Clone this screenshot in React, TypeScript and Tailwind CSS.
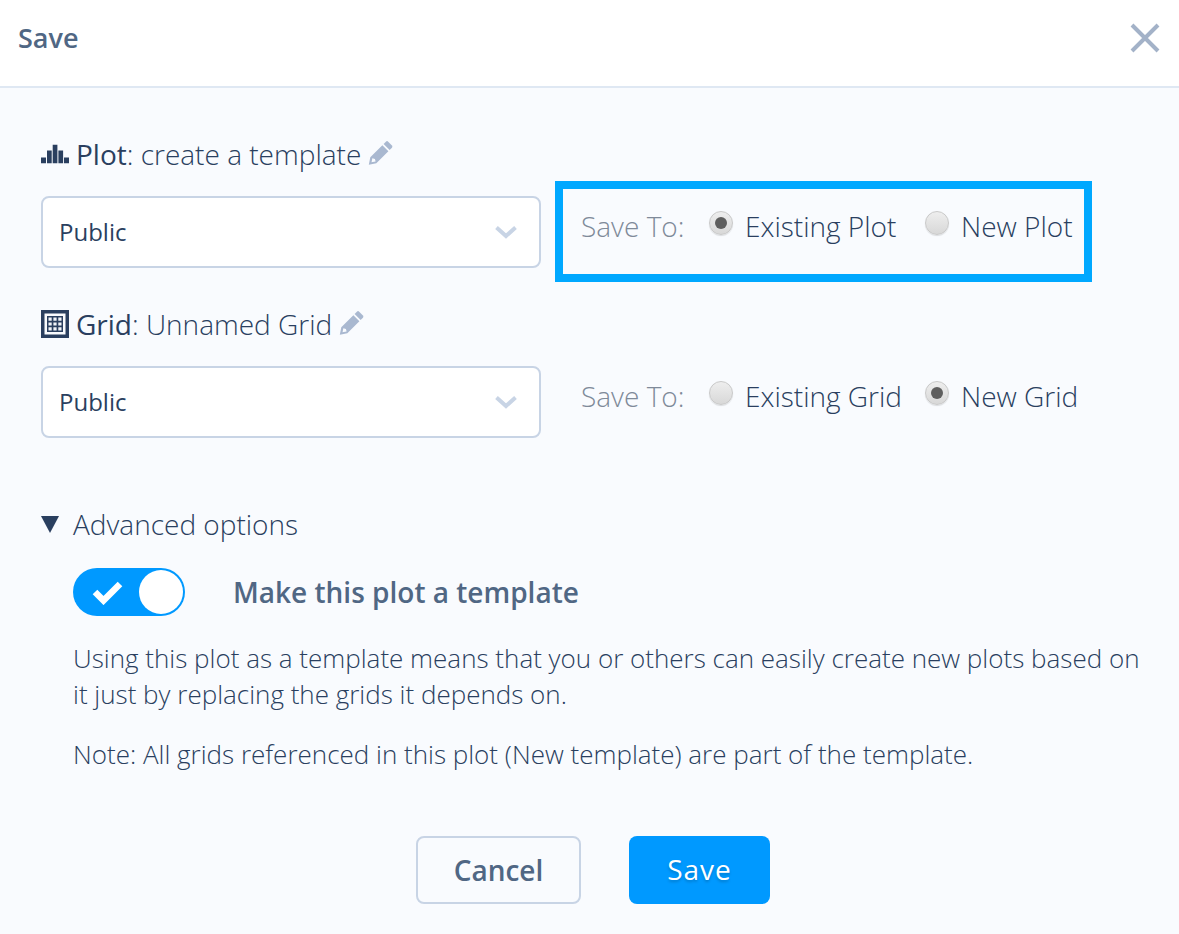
import React from "react";

const Pencil = () => (
  <svg width="26" height="26" viewBox="0 0 25 25" className="shrink-0 -translate-y-[1px]">
    <path d="M17.2 1.6 a1.6 1.6 0 0 1 2.2 0 l3.6 3.6 a1.6 1.6 0 0 1 0 2.2 l-2.2 2.2 -5.8 -5.8z" fill="#a9b8d0" />
    <path d="M13.8 5 l5.8 5.8 -11.6 11.6 -7.2 1.4 1.4 -7.2z M4.2 17.6 l-0.8 3.9 3.9 -0.8 -0.6 -2.5z" fill="#a9b8d0" fillRule="evenodd" />
  </svg>
);

const Chevron = () => (
  <svg width="24" height="14" viewBox="0 0 24 14" className="shrink-0">
    <path d="M2.5 2.5 L12 11 L21.5 2.5" fill="none" stroke="#c8d4e5" strokeWidth="4" />
  </svg>
);

const Select = () => (
  <div className="w-[500px] h-[72px] shrink-0 flex items-center justify-between pl-[16px] pr-[21px] bg-white border-2 border-[#c8d4e5] rounded-lg text-[24px] text-[#2a3f5f]">
    <span>Public</span>
    <Chevron />
  </div>
);

const Radio = ({ on }: { on?: boolean }) => (
  <span className="w-6 h-6 rounded-full shrink-0 flex items-center justify-center border border-[#c9c9c9] bg-gradient-to-b from-[#eeeeee] to-[#d8d8d8] shadow-[0_1px_1px_rgba(0,0,0,0.12)] -translate-y-[3px]">
    {on && <span className="w-[12px] h-[12px] rounded-full bg-[#5e5e5e]" />}
  </span>
);

const SaveTo = ({ a, b, first }: { a: string; b: string; first: boolean }) => (
  <div className="flex items-center ml-10 pb-[12px] text-[28px] font-light text-[#2a3f5f]">
    <span className="w-[128px] text-[#7f8a99]">Save To:</span>
    <span className="w-[216px] flex items-center gap-3">
      <Radio on={first} />
      <span>{a}</span>
    </span>
    <span className="flex items-center gap-3">
      <Radio on={!first} />
      <span>{b}</span>
    </span>
  </div>
);

export default function App() {
  return (
    <div className="relative w-[1179px] h-[934px] overflow-hidden bg-[#f9fbfe] text-[#2a3f5f] font-['Open_Sans',sans-serif]">
      <header className="h-[88px] bg-white border-b-2 border-[#dfe8f3] flex items-center justify-between pl-[18px] pr-[19px] pb-[10px]">
        <h1 className="text-[27px] font-semibold text-[#506784]">Save</h1>
        <svg width="30" height="30" viewBox="0 0 30 30">
          <path d="M2 2 L28 28 M28 2 L2 28" stroke="#a3b2c8" strokeWidth="4" />
        </svg>
      </header>

      <main className="pl-[41px]">
        <div className="pt-[39px] h-[93px] flex items-center gap-[7px] text-[28px] font-light">
          <svg width="28" height="19" viewBox="0 0 28 19" className="shrink-0 -translate-y-[0.5px]" fill="#2a3f5f">
            <rect x="0" y="13" width="5" height="6" />
            <rect x="6" y="6" width="4.7" height="13" />
            <rect x="11.7" y="0" width="4.7" height="19" />
            <rect x="17.4" y="6" width="4.7" height="13" />
            <rect x="23" y="13" width="5" height="6" />
          </svg>
          <span>
            <span className="font-normal">Plot</span>: create a template
          </span>
          <Pencil />
        </div>
        <div className="flex items-center mt-[15px]">
          <Select />
          <SaveTo a="Existing Plot" b="New Plot" first={true} />
        </div>

        <div className="mt-[36px] h-[40px] flex items-center gap-[7px] text-[28px] font-light">
          <svg width="28" height="28" viewBox="0 0 28 28" className="shrink-0">
            <rect width="28" height="28" fill="#2a3f5f" />
            <rect x="3.5" y="3.5" width="21" height="21" fill="#f9fbfe" />
            <rect x="6" y="6" width="16" height="16" fill="#2a3f5f" />
            <path d="M7.5 7.5h3.2v3.2h-3.2z M12.4 7.5h3.2v3.2h-3.2z M17.3 7.5h3.2v3.2h-3.2z M7.5 12.4h3.2v3.2h-3.2z M12.4 12.4h3.2v3.2h-3.2z M17.3 12.4h3.2v3.2h-3.2z M7.5 17.3h3.2v3.2h-3.2z M12.4 17.3h3.2v3.2h-3.2z M17.3 17.3h3.2v3.2h-3.2z" fill="#f0f3f8" />
          </svg>
          <span>
            <span className="font-normal">Grid</span>: Unnamed Grid
          </span>
          <Pencil />
        </div>
        <div className="flex items-center mt-[22px]">
          <Select />
          <SaveTo a="Existing Grid" b="New Grid" first={false} />
        </div>

        <div className="mt-[66px] h-[40px] flex items-center text-[28px] font-light">
          <svg width="18" height="17" viewBox="0 0 18 17" className="shrink-0">
            <path d="M0 0 H18 L9 17z" fill="#2a3f5f" />
          </svg>
          <span className="ml-[14px]">Advanced options</span>
        </div>

        <div className="pl-[32px]">
          <div className="mt-[24px] flex items-center">
            <div className="w-[112px] h-[48px] rounded-full bg-[#0099ff] flex items-center justify-between pl-[19px] pr-[2px]">
              <svg width="31" height="26" viewBox="0 0 31 26">
                <path d="M3 13 L11.5 21.5 L28 5" fill="none" stroke="#fff" strokeWidth="6.5" />
              </svg>
              <span className="w-[44px] h-[44px] rounded-full bg-white" />
            </div>
            <span className="ml-[48px] text-[28px] font-semibold text-[#506784]">Make this plot a template</span>
          </div>
          <p className="mt-[24px] w-[1080px] text-[26px] leading-[36px] font-light">
            Using this plot as a template means that you or others can easily create new plots based on it just by replacing the grids it depends on.
          </p>
          <p className="mt-[24px] text-[26px] leading-[36px] font-light">
            Note: All grids referenced in this plot (New template) are part of the template.
          </p>
        </div>

        <div className="mt-[64px] pl-[375px] flex items-center gap-[48px]">
          <button className="w-[165px] h-[68px] rounded-lg border-2 border-[#c8d4e5] text-[28px] font-semibold text-[#506784]">Cancel</button>
          <button className="w-[141px] h-[68px] rounded-lg bg-[#0099ff] pb-[2px] text-[28px] tracking-[1px] text-white [text-shadow:0_2px_3px_rgba(0,0,0,0.2)]">Save</button>
        </div>
      </main>

      <div className="absolute left-[555px] top-[181px] w-[537px] h-[101px] border-[8px] border-[#00a8ff] pointer-events-none" />
    </div>
  );
}
